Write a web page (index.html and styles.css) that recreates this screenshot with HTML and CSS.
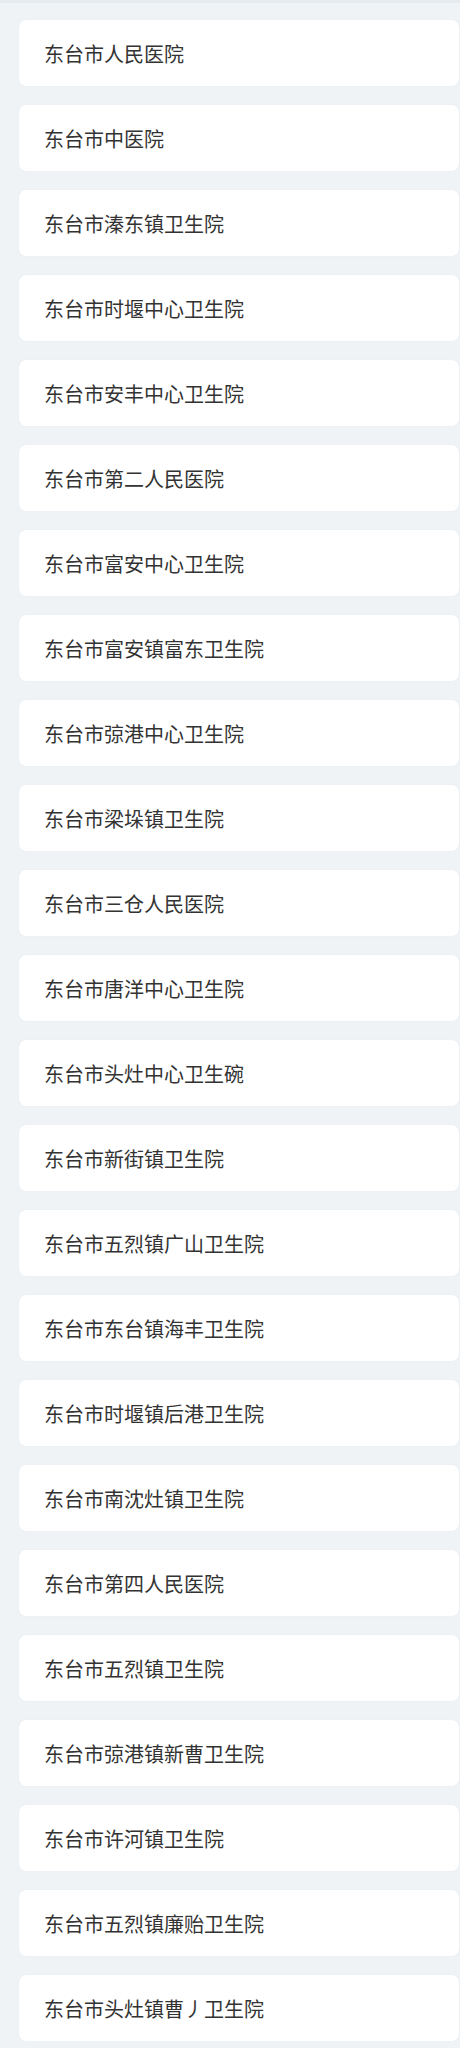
FILE: index.html
```html
<!DOCTYPE html>
<html lang="zh">
<head>
<meta charset="utf-8">
<link rel="stylesheet" href="styles.css">
</head>
<body>
<div class="topline"></div>
<ul class="list">
<li class="item">东台市人民医院</li>
<li class="item">东台市中医院</li>
<li class="item">东台市溱东镇卫生院</li>
<li class="item">东台市时堰中心卫生院</li>
<li class="item">东台市安丰中心卫生院</li>
<li class="item">东台市第二人民医院</li>
<li class="item">东台市富安中心卫生院</li>
<li class="item">东台市富安镇富东卫生院</li>
<li class="item">东台市弶港中心卫生院</li>
<li class="item">东台市梁垛镇卫生院</li>
<li class="item">东台市三仓人民医院</li>
<li class="item">东台市唐洋中心卫生院</li>
<li class="item">东台市头灶中心卫生碗</li>
<li class="item">东台市新街镇卫生院</li>
<li class="item">东台市五烈镇广山卫生院</li>
<li class="item">东台市东台镇海丰卫生院</li>
<li class="item">东台市时堰镇后港卫生院</li>
<li class="item">东台市南沈灶镇卫生院</li>
<li class="item">东台市第四人民医院</li>
<li class="item">东台市五烈镇卫生院</li>
<li class="item">东台市弶港镇新曹卫生院</li>
<li class="item">东台市许河镇卫生院</li>
<li class="item">东台市五烈镇廉贻卫生院</li>
<li class="item">东台市头灶镇曹丿卫生院</li>
</ul>
</body>
</html>
```

FILE: styles.css
```css
html, body {
  margin: 0;
  padding: 0;
  background: #f0f3f6;
}
body {
  font-family: "Noto Sans CJK SC", "Noto Sans", sans-serif;
  color: #333333;
}
.topline {
  height: 3px;
  background: #e6ebef;
}
.list {
  list-style: none;
  margin: 0;
  padding: 17px 1px 0 19px;
  display: flex;
  flex-direction: column;
  gap: 19px;
}
.item {
  height: 66px;
  box-sizing: border-box;
  background: #ffffff;
  border-radius: 7px;
  box-shadow: 0 0 1px rgba(200, 210, 218, 0.6);
  display: flex;
  align-items: center;
  padding: 2px 0 0 25px;
  font-size: 20px;
  line-height: 1;
  white-space: nowrap;
}
```
